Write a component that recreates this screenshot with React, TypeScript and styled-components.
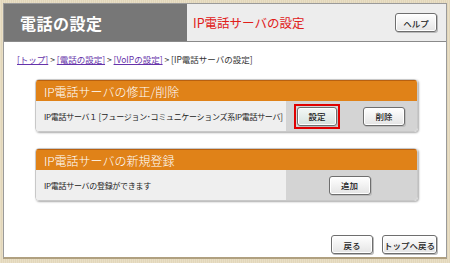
import * as React from 'react';
import styled, { createGlobalStyle } from 'styled-components';

const GlobalStyle = createGlobalStyle`
  html, body {
    margin: 0;
    padding: 0;
    background: #e6dcc4;
  }
  body {
    font-family: 'Noto Sans CJK JP', 'DejaVu Sans', sans-serif;
  }
`;

const Page = styled.div`
  width: 450px;
  height: 263px;
  box-sizing: border-box;
  padding: 3px 3px 4px 3px;
  background: repeating-linear-gradient(90deg, #e9dfc6 0 1px, #e2d6ba 1px 2px);
`;

const Frame = styled.div`
  height: 100%;
  box-sizing: border-box;
  background: #fff;
  border: 1px solid #9a9a9a;
  border-bottom: 2px solid #b0a080;
  display: flex;
  flex-direction: column;
`;

const Header = styled.div`
  display: flex;
  height: 37px;
  border-bottom: 1px solid #8a8a8a;
`;

const TitleBlock = styled.div`
  width: 183px;
  background: #777;
  color: #fff;
  font-size: 16px;
  font-weight: 700;
  display: flex;
  align-items: center;
  padding-left: 16px;
  box-sizing: border-box;
  letter-spacing: 0.5px;
`;

const SubBlock = styled.div`
  flex: 1;
  background: #ededed;
  display: flex;
  align-items: center;
  justify-content: space-between;
  padding: 0 9px 0 6px;
`;

const SubTitle = styled.div`
  color: #e0201a;
  font-size: 12.5px;
`;

const Button = styled.button<{ $w: number; $focus?: boolean }>`
  width: ${p => p.$w}px;
  height: 19px;
  padding: 0;
  font-family: inherit;
  font-size: 8.5px;
  font-weight: 500;
  white-space: nowrap;
  color: #222;
  background: ${p => (p.$focus ? 'linear-gradient(#f4f8f6, #d6e2de)' : 'linear-gradient(#ffffff, #e4e4e4)')};
  border: 1px solid #6e6e6e;
  border-radius: 3px;
  box-shadow: inset 0 0 0 1px #fff, 1px 1px 0 #bbb;
  cursor: pointer;
`;

const Highlight = styled.div`
  border: 2px solid #e00000;
  padding: 1px;
  display: inline-flex;
`;

const Body = styled.div`
  flex: 1;
  display: flex;
  flex-direction: column;
  padding: 11px 9px 3px 13px;
`;

const Crumbs = styled.div`
  font-size: 8.5px;
  color: #333;
  a {
    color: #6633aa;
    text-decoration: underline;
  }
`;

const Section = styled.div<{ $gap: number }>`
  margin: ${p => p.$gap}px 19px 0 18px;
  border-radius: 4px;
  overflow: hidden;
  box-shadow: 1px 1px 2px #aaa;
  border: 1px solid #c8c8c8;
`;

const SectionHead = styled.div`
  background: #e08218;
  border-top: 1px solid #b86010;
  color: #fff;
  font-size: 12px;
  font-weight: 300;
  height: 20px;
  display: flex;
  align-items: center;
  padding-left: 8px;
`;

const Row = styled.div`
  display: flex;
  height: 30px;
`;

const RowText = styled.div`
  flex: 1;
  min-width: 0;
  overflow: hidden;
  background: #efefef;
  font-size: 8px;
  letter-spacing: -0.3px;
  color: #222;
  display: flex;
  align-items: center;
  padding-left: 8px;
  white-space: nowrap;
`;

const RowActions = styled.div<{ $center?: boolean }>`
  width: 131px;
  flex-shrink: 0;
  background: #d4d4d4;
  display: flex;
  align-items: center;
  justify-content: ${p => (p.$center ? 'center' : 'space-between')};
  padding: 0 12px 0 8px;
  box-sizing: border-box;
`;

const Footer = styled.div`
  margin-top: auto;
  display: flex;
  justify-content: flex-end;
  gap: 9px;
`;

export default function App() {
  return (
    <>
      <GlobalStyle />
      <Page>
        <Frame>
          <Header>
            <TitleBlock>電話の設定</TitleBlock>
            <SubBlock>
              <SubTitle>IP電話サーバの設定</SubTitle>
              <Button $w={42}>ヘルプ</Button>
            </SubBlock>
          </Header>
          <Body>
            <Crumbs>
              <a>[トップ]</a> &gt; <a>[電話の設定]</a> &gt; <a>[VoIPの設定]</a> &gt; [IP電話サーバの設定]
            </Crumbs>
            <Section $gap={14}>
              <SectionHead>IP電話サーバの修正/削除</SectionHead>
              <Row>
                <RowText>IP電話サーバ１ [フュージョン･コミュニケーションズ系IP電話サーバ]</RowText>
                <RowActions>
                  <Highlight>
                    <Button $w={40} $focus>設定</Button>
                  </Highlight>
                  <Button $w={42}>削除</Button>
                </RowActions>
              </Row>
            </Section>
            <Section $gap={16}>
              <SectionHead>IP電話サーバの新規登録</SectionHead>
              <Row>
                <RowText>IP電話サーバの登録ができます</RowText>
                <RowActions $center>
                  <Button $w={42}>追加</Button>
                </RowActions>
              </Row>
            </Section>
            <Footer>
              <Button $w={42}>戻る</Button>
              <Button $w={55}>トップへ戻る</Button>
            </Footer>
          </Body>
        </Frame>
      </Page>
    </>
  );
}
